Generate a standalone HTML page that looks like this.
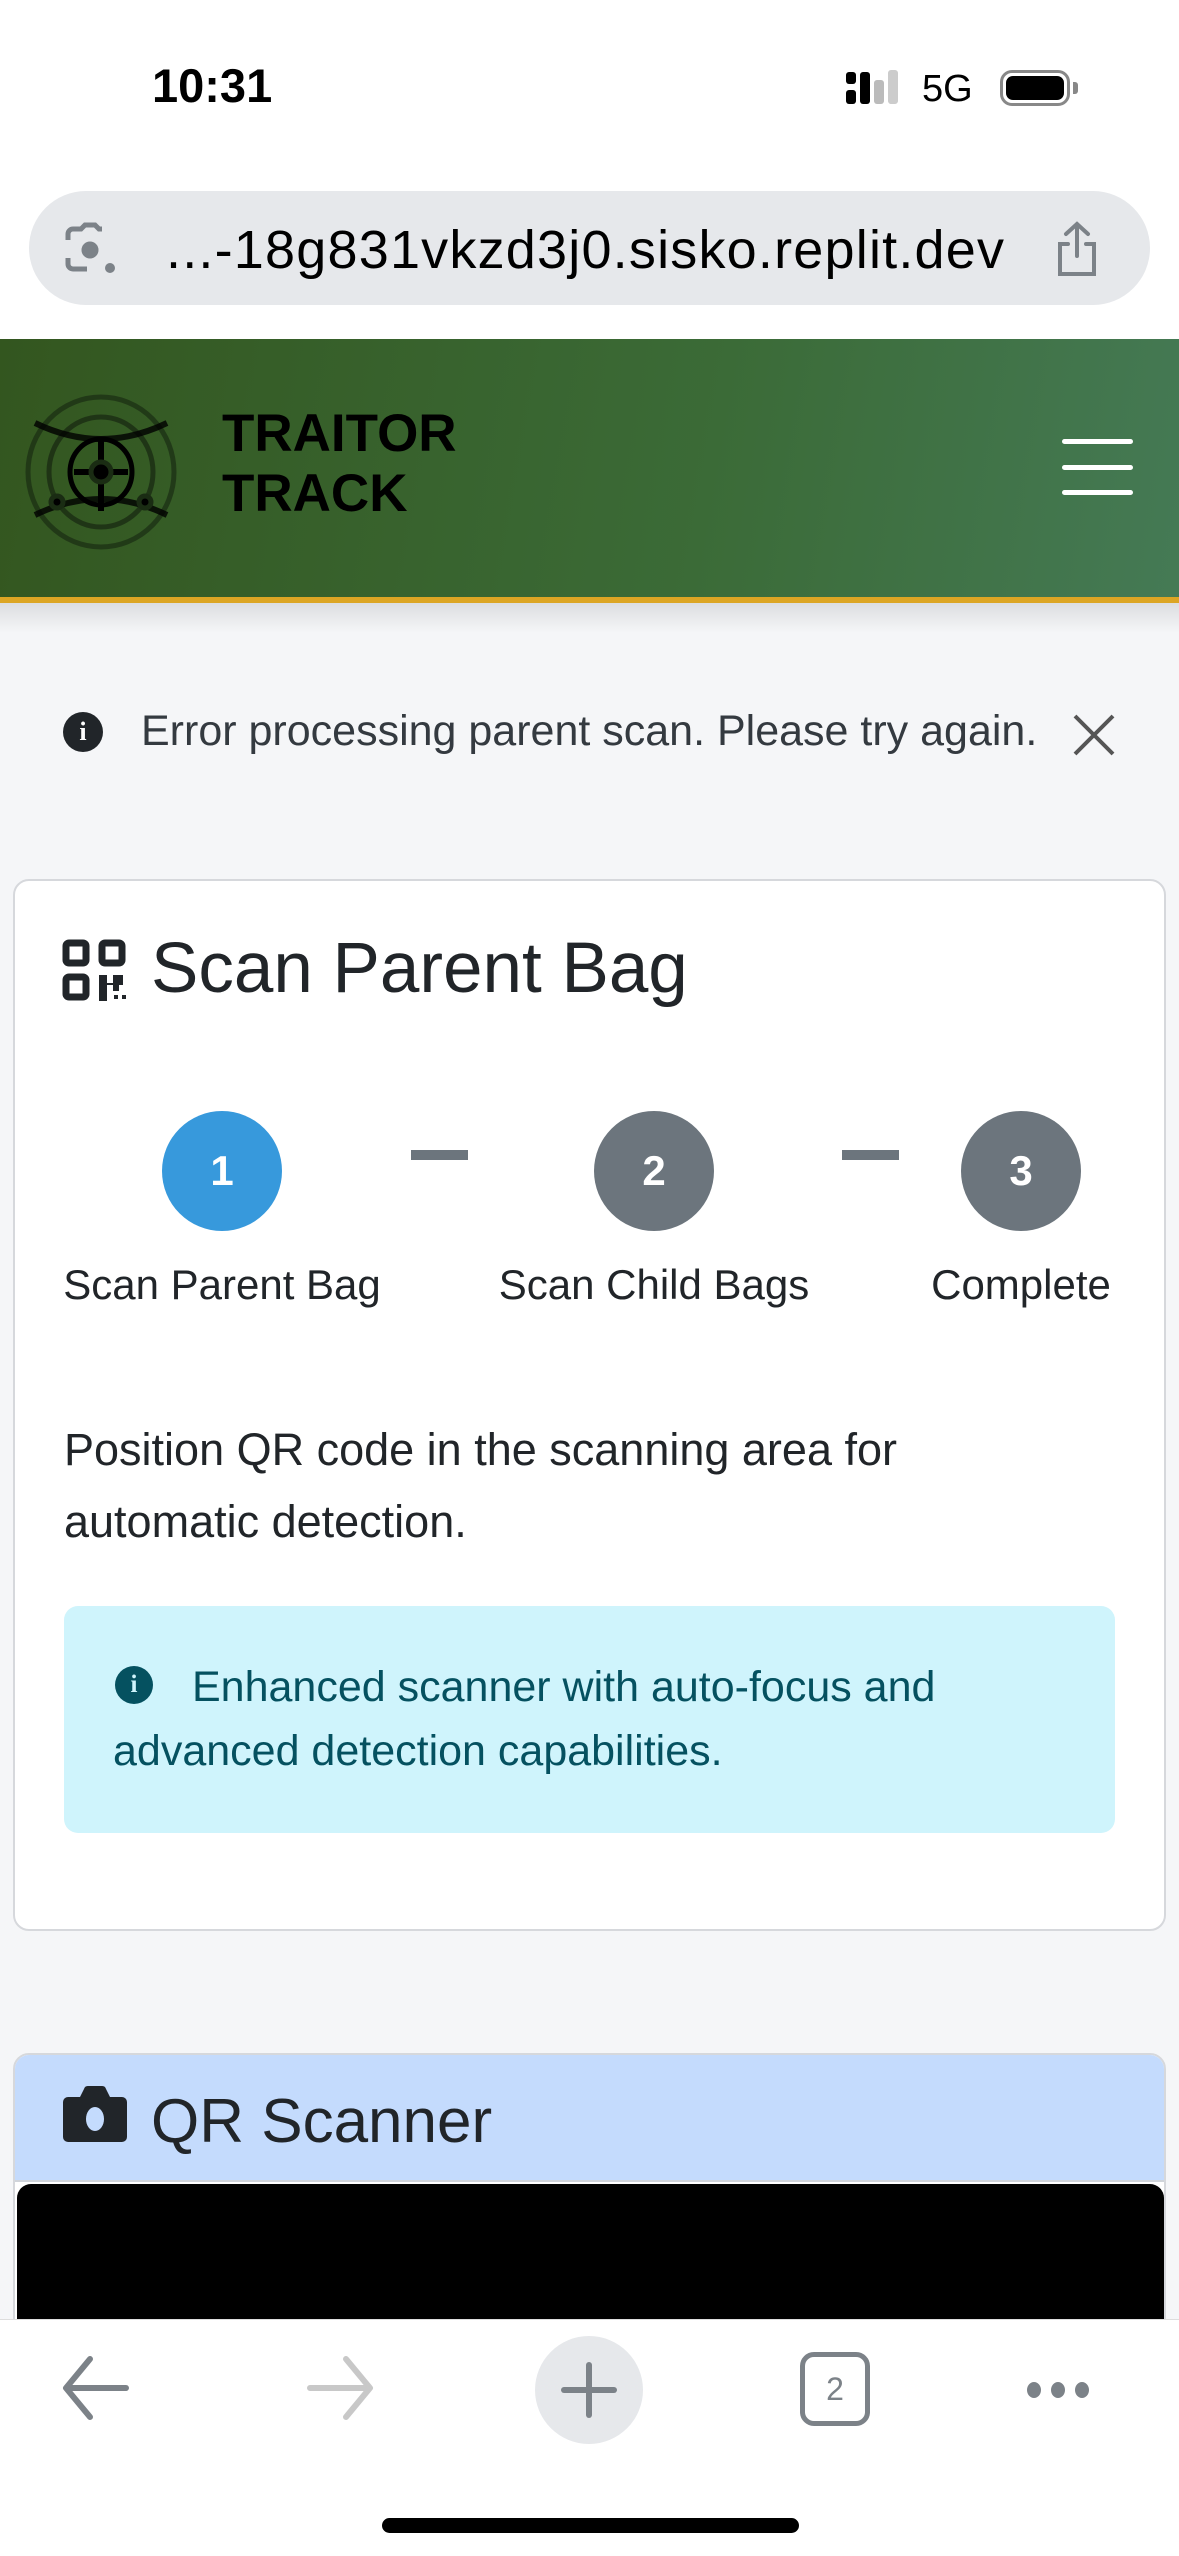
<!DOCTYPE html>
<html><head><meta charset="utf-8">
<style>
*{margin:0;padding:0;box-sizing:border-box}
body{width:1179px;height:2556px;position:relative;overflow:hidden;background:#f5f6f8;font-family:"Liberation Sans",sans-serif;color:#212529}
.abs{position:absolute}
</style></head><body>
<!-- status + url -->
<div class="abs" style="left:0;top:0;width:1179px;height:339px;background:#fff"></div>
<div class="abs" style="left:152px;top:58px;font-size:47px;font-weight:bold;color:#000">10:31</div>
<div class="abs" style="left:846px;top:72px;width:10px;height:12px;background:#000;border-radius:3px"></div>
<div class="abs" style="left:846px;top:90px;width:10px;height:14px;background:#000;border-radius:3px"></div>
<div class="abs" style="left:860px;top:72px;width:10px;height:32px;background:#000;border-radius:3px"></div>
<div class="abs" style="left:874px;top:80px;width:10px;height:24px;background:#bbb;border-radius:3px"></div>
<div class="abs" style="left:888px;top:70px;width:10px;height:34px;background:#ccc;border-radius:3px"></div>
<div class="abs" style="left:922px;top:68px;font-size:38px;color:#000">5G</div>
<div class="abs" style="left:1000px;top:70px;width:70px;height:36px;border:3px solid #888;border-radius:12px;padding:3px"><div style="width:100%;height:100%;background:#000;border-radius:7px"></div></div>
<div class="abs" style="left:1073px;top:82px;width:5px;height:12px;background:#888;border-radius:0 3px 3px 0"></div>
<div class="abs" style="left:29px;top:191px;width:1121px;height:114px;background:#e6e8eb;border-radius:57px"></div>
<svg class="abs" style="left:64px;top:222px" width="56" height="56" viewBox="0 0 56 56" fill="none" stroke="#7c8288" stroke-width="5"><path d="M4 18V12a5 5 0 0 1 5-5h8l4-4h10l4 4h3M4 36v6a5 5 0 0 0 5 5h14"/><circle cx="26" cy="28" r="6" fill="#7c8288"/><circle cx="46" cy="46" r="5" fill="#7c8288" stroke="none"/></svg>
<div class="abs" style="left:166px;top:219px;font-size:54px;color:#000;letter-spacing:1.2px;white-space:nowrap">...-18g831vkzd3j0.sisko.replit.dev</div>
<svg class="abs" style="left:1052px;top:220px" width="50" height="60" viewBox="0 0 50 60" fill="none" stroke="#7c8288" stroke-width="4" stroke-linecap="round"><path d="M25 4v32M14 14 25 4l11 10M16 24H8v30h34V24h-8"/></svg>
<!-- header -->
<div class="abs" style="left:0;top:339px;width:1179px;height:258px;background:linear-gradient(100deg,#33561f,#3b6b37 60%,#457a55)"></div>
<div class="abs" style="left:0;top:597px;width:1179px;height:6px;background:#dca524"></div>
<div class="abs" style="left:0;top:603px;width:1179px;height:30px;background:linear-gradient(#dcdde0,#f5f6f8)"></div>
<svg class="abs" style="left:22px;top:393px" width="158" height="158" viewBox="0 0 158 158" fill="none" stroke="#1a2c13" stroke-width="5"><ellipse cx="79" cy="79" rx="73" ry="75" opacity=".7"/><ellipse cx="79" cy="79" rx="52" ry="55" opacity=".8"/><ellipse cx="79" cy="79" rx="31" ry="33" stroke="#000"/><path d="M79 46v72M52 79h54" stroke="#000" stroke-width="6"/><circle cx="79" cy="79" r="10" fill="#000"/><path d="M13 30q66 32 132 0M13 122q66-32 132 0" stroke="#000" opacity=".8" stroke-width="6"/><circle cx="35" cy="109" r="6" fill="#000"/><circle cx="123" cy="109" r="6" fill="#000"/></svg>
<div class="abs" style="left:222px;top:404px;font-size:53px;font-weight:bold;color:#000;line-height:60px">TRAITOR<br>TRACK</div>
<div class="abs" style="left:1062px;top:439px;width:71px;height:5px;background:#fff;border-radius:3px"></div>
<div class="abs" style="left:1062px;top:465px;width:71px;height:5px;background:#fff;border-radius:3px"></div>
<div class="abs" style="left:1062px;top:490px;width:71px;height:5px;background:#fff;border-radius:3px"></div>
<!-- alert -->
<div class="abs" style="left:63px;top:712px;width:40px;height:40px;border-radius:50%;background:#212529;color:#fff;font-size:26px;font-weight:bold;text-align:center;line-height:40px;font-family:'Liberation Serif',serif">i</div>
<div class="abs" style="left:141px;top:707px;font-size:43px;color:#343a40;white-space:nowrap">Error processing parent scan. Please try again.</div>
<svg class="abs" style="left:1072px;top:713px" width="44" height="44" viewBox="0 0 44 44" stroke="#555" stroke-width="4"><path d="M3 3l38 38M41 3 3 41"/></svg>
<!-- card 1 -->
<div class="abs" style="left:13px;top:879px;width:1153px;height:1052px;background:#fff;border:2px solid #d6d8dc;border-radius:16px"></div>
<svg class="abs" style="left:62px;top:939px" width="68" height="62" viewBox="0 0 68 62"><g fill="none" stroke="#212529" stroke-width="7"><rect x="4" y="4" width="20" height="20" rx="3"/><rect x="40" y="4" width="20" height="20" rx="3"/><rect x="4" y="38" width="20" height="20" rx="3"/></g><path d="M37 36h8v8h6v-8h10v10h-4v6h-6v-6h-6v16h-8z" fill="#212529"/><rect x="52" y="56" width="4" height="4" fill="#212529"/><rect x="60" y="56" width="4" height="4" fill="#212529"/></svg>
<div class="abs" style="left:151px;top:928px;font-size:71px;color:#212529">Scan Parent Bag</div>
<div class="abs" style="left:162px;top:1111px;width:120px;height:120px;border-radius:50%;background:#3799dc;color:#fff;font-size:42px;font-weight:bold;text-align:center;line-height:120px">1</div>
<div class="abs" style="left:594px;top:1111px;width:120px;height:120px;border-radius:50%;background:#6c757d;color:#fff;font-size:42px;font-weight:bold;text-align:center;line-height:120px">2</div>
<div class="abs" style="left:961px;top:1111px;width:120px;height:120px;border-radius:50%;background:#6c757d;color:#fff;font-size:42px;font-weight:bold;text-align:center;line-height:120px">3</div>
<div class="abs" style="left:411px;top:1150px;width:57px;height:10px;background:#6c757d"></div>
<div class="abs" style="left:842px;top:1150px;width:57px;height:10px;background:#6c757d"></div>
<div class="abs" style="left:22px;top:1261px;width:400px;text-align:center;font-size:42px">Scan Parent Bag</div>
<div class="abs" style="left:454px;top:1261px;width:400px;text-align:center;font-size:42px">Scan Child Bags</div>
<div class="abs" style="left:871px;top:1261px;width:300px;text-align:center;font-size:42px">Complete</div>
<div class="abs" style="left:64px;top:1414px;width:1000px;font-size:45px;line-height:72px">Position QR code in the scanning area for automatic detection.</div>
<div class="abs" style="left:64px;top:1606px;width:1051px;height:227px;background:#cff4fc;border-radius:14px"></div>
<div class="abs" style="left:115px;top:1666px;width:38px;height:38px;border-radius:50%;background:#055160;color:#cff4fc;font-size:25px;font-weight:bold;text-align:center;line-height:38px;font-family:'Liberation Serif',serif">i</div>
<div class="abs" style="left:113px;top:1655px;width:960px;font-size:43px;line-height:64px;color:#055160;text-indent:79px">Enhanced scanner with auto-focus and advanced detection capabilities.</div>
<!-- card 2 -->
<div class="abs" style="left:13px;top:2053px;width:1153px;height:400px;background:#fff;border:2px solid #d6d8dc;border-radius:16px;overflow:hidden">
<div style="height:127px;background:#c4dbfd;border-bottom:2px solid #d0d4da"></div>
<div style="position:absolute;left:2px;top:129px;width:1147px;height:300px;background:#000;border-radius:14px 14px 0 0"></div>
</div>
<svg class="abs" style="left:62px;top:2085px" width="66" height="58" viewBox="0 0 66 58"><path d="M6 12h12l4-8a4 4 0 0 1 4-3h14a4 4 0 0 1 4 3l4 8h12a5 5 0 0 1 5 5v35a5 5 0 0 1-5 5H6a5 5 0 0 1-5-5V17a5 5 0 0 1 5-5z" fill="#212529"/><ellipse cx="33" cy="34" rx="9" ry="12" fill="#c4dbfd"/></svg>
<div class="abs" style="left:151px;top:2086px;font-size:62px;color:#212529">QR Scanner</div>
<!-- toolbar -->
<div class="abs" style="left:0;top:2319px;width:1179px;height:237px;background:#fff;border-top:1px solid #ddd"></div>
<svg class="abs" style="left:60px;top:2355px" width="70" height="66" viewBox="0 0 70 66" fill="none" stroke="#7c8288" stroke-width="6" stroke-linecap="round"><path d="M66 33H6M30 4 6 33l24 29" stroke-linejoin="round"/></svg>
<svg class="abs" style="left:306px;top:2355px" width="70" height="66" viewBox="0 0 70 66" fill="none" stroke="#c8c8c8" stroke-width="6" stroke-linecap="round"><path d="M4 33h60M40 4l24 29-24 29" stroke-linejoin="round"/></svg>
<div class="abs" style="left:535px;top:2336px;width:108px;height:108px;border-radius:50%;background:#e6e8eb"></div>
<div class="abs" style="left:561px;top:2387px;width:56px;height:6px;background:#7c8288;border-radius:3px"></div>
<div class="abs" style="left:586px;top:2362px;width:6px;height:56px;background:#7c8288;border-radius:3px"></div>
<div class="abs" style="left:800px;top:2352px;width:70px;height:74px;border:5px solid #7c8288;border-radius:14px;text-align:center;font-size:32px;line-height:64px;color:#7c8288">2</div>
<div class="abs" style="left:1027px;top:2382px;width:14px;height:16px;border-radius:50%;background:#7c8288"></div>
<div class="abs" style="left:1051px;top:2382px;width:14px;height:16px;border-radius:50%;background:#7c8288"></div>
<div class="abs" style="left:1075px;top:2382px;width:14px;height:16px;border-radius:50%;background:#7c8288"></div>
<div class="abs" style="left:382px;top:2518px;width:417px;height:15px;background:#000;border-radius:8px"></div>
</body></html>
